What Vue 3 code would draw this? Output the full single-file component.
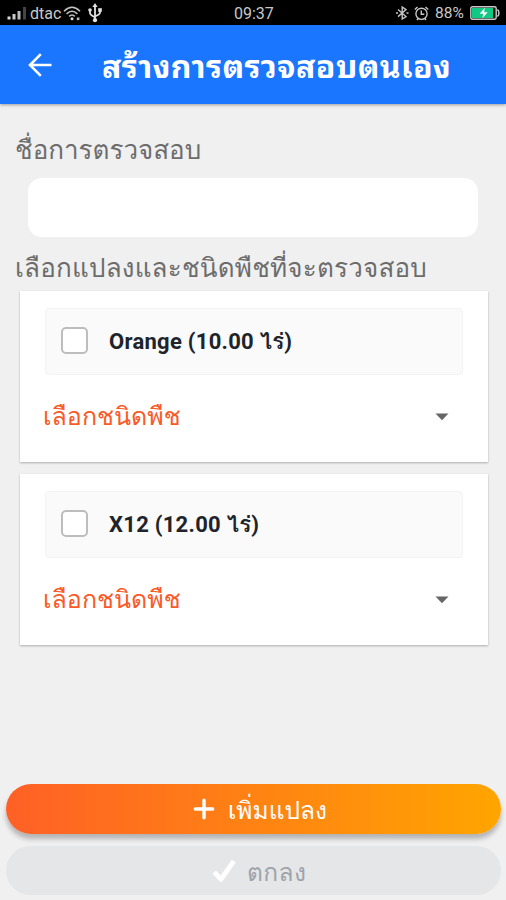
<script setup>
const plots = [
  { id: 1, name: 'Orange (10.00 ไร่)' },
  { id: 2, name: 'X12 (12.00 ไร่)' },
]
</script>

<template>
  <div class="screen">
    <div class="status">
      <svg class="signal" viewBox="0 0 20 14" width="20" height="14">
        <rect x="0.5" y="10.5" width="3" height="3" fill="#ddd" />
        <rect x="5.5" y="8" width="3" height="5.5" fill="#ccc" />
        <rect x="10.5" y="5" width="3" height="8.5" fill="#bbb" />
        <rect x="16" y="1" width="3" height="12.5" fill="#444" />
      </svg>
      <span class="carrier">dtac</span>
      <svg class="wifi" viewBox="0 0 18 15" width="18" height="15" fill="none" stroke="#c4c4c4" stroke-width="1.5">
        <path d="M1 5.2Q9-2.6 17 5.2M3.6 7.9Q9 2.5 14.4 7.9M6.2 10.4Q9 7.6 11.8 10.4" />
        <circle cx="9" cy="12.8" r="1.5" fill="#ddd" stroke="none" />
        <rect x="13.8" y="11.5" width="2.6" height="2.6" fill="#bbb" stroke="none" />
      </svg>
      <svg class="usb" viewBox="0 0 14 20" width="14" height="20" fill="none" stroke="#e2e2e2" stroke-width="1.8">
        <path d="M7 2v15M2 7v3.2q0 1.6 5 4M12 7v2.8q0 1.6-5 3.6" />
        <path d="M7 0l2.6 4H4.4z" fill="#e2e2e2" stroke="none" />
        <circle cx="2" cy="7" r="1.8" fill="#e2e2e2" stroke="none" />
        <rect x="10.2" y="5.2" width="3.6" height="3.6" fill="#e2e2e2" stroke="none" />
        <circle cx="7" cy="17.2" r="2.1" fill="#e2e2e2" stroke="none" />
      </svg>
      <span class="clock">09:37</span>
      <svg class="bt" viewBox="0 0 13 14" width="13" height="14" fill="none" stroke="#c4c4c4" stroke-width="1.4">
        <path d="M2 3.4l8 7.2L6.2 13V1L10 3.6 2 10.6" />
        <path d="M0 7h2M10.5 7h2" stroke-width="1.7" />
      </svg>
      <svg class="alarm" viewBox="0 0 15 15" width="15" height="15" fill="none" stroke="#c8c8c8" stroke-width="1.4">
        <circle cx="7.5" cy="7.8" r="5.6" />
        <path d="M7.3 4.5v3.7h3M.8 3.5L3.5 1M14.2 3.5L11.5 1M3 14l1.2-1.5M12 14l-1.2-1.5" />
      </svg>
      <span class="percent">88%</span>
      <svg class="battery" viewBox="0 0 30 14" width="30" height="14">
        <rect x="0.8" y="0.8" width="25.4" height="12.4" rx="1.6" fill="#111" stroke="#c9c9c9" stroke-width="1.4" />
        <path d="M27.3 3.8q1.6.4 1.6 3.2t-1.6 3.2" fill="none" stroke="#c9c9c9" stroke-width="1.4" />
        <rect x="2" y="2" width="21" height="10" fill="#10c982" />
        <path d="M14.8 1.7l-5.2 6h3.5l-.7 4.6 5.3-6h-3.5z" fill="#fff" />
      </svg>
    </div>

    <header class="bar">
      <svg class="back" viewBox="0 0 24 24" width="24" height="24" fill="none" stroke="#fff" stroke-width="2.6">
        <path d="M23.5 12H2.2M12.8 1.2L2 12l10.8 10.8" />
      </svg>
      <h1 class="title">สร้างการตรวจสอบตนเอง</h1>
    </header>

    <main class="content">
      <label class="label label-name" for="check-name"><span>ชื่อการตรวจสอบ</span></label>
      <input id="check-name" class="field" type="text" />
      <div class="label label-plots"><span>เลือกแปลงและชนิดพืชที่จะตรวจสอบ</span></div>
      <section v-for="plot in plots" :key="plot.id" class="card">
        <div class="plot">
          <span class="box"></span>
          <span class="name">{{ plot.name }}</span>
        </div>
        <div class="select">
          <span class="choice">เลือกชนิดพืช</span>
          <svg viewBox="0 0 14 8" width="14" height="8"><path d="M.5.5h13L7 7.3z" fill="#666" /></svg>
        </div>
      </section>
    </main>

    <footer class="actions">
      <button class="btn add">
        <svg viewBox="0 0 22 22" width="22" height="22" fill="none" stroke="#fff" stroke-width="3.4" stroke-linecap="round">
          <path d="M11 2.3v17.4M2.3 11h17.4" />
        </svg>
        <span class="add-text">เพิ่มแปลง</span>
      </button>
      <button class="btn ok">
        <svg viewBox="0 0 24 24" width="24" height="24" fill="none" stroke="#fff" stroke-width="4.8">
          <path d="M2.2 13.2l6.7 7.2L21.8 2.2" stroke-linejoin="round" />
        </svg>
        <span class="ok-text">ตกลง</span>
      </button>
    </footer>
  </div>
</template>

<style>
body { background: #f0f0f0; }
</style>

<style scoped>
.screen {
  width: 506px; height: 900px; display: flex; flex-direction: column;
  background: #f0f0f0; overflow: hidden;
  font-family: Roboto, Loma, sans-serif;
  white-space: nowrap;
}
.status {
  height: 25px; flex: none; background: #000; color: #c8c8c8;
  display: flex; align-items: center; font-size: 16px; line-height: 25px; padding-top: 1px; box-sizing: border-box;
}
.status svg { flex: none; }
.signal { margin-left: 7px; }
.carrier { margin-left: 3px; width: 32px; }
.wifi { margin-left: 1px; }
.usb { margin-left: 7px; }
.clock { margin-left: 132px; width: 40px; }
.bt { margin-left: 122px; }
.alarm { margin-left: 5px; }
.percent { margin-left: 6px; width: 29px; font-size: 15.5px; }
.battery { margin-left: 6px; }
.bar {
  height: 79px; flex: none; background: #1a75ff; display: flex; align-items: center;
  box-shadow: 0 1px 3px rgba(0, 0, 0, .35);
}
.back { margin-left: 28px; flex: none; }
.title {
  margin: 0 0 1px 50px; color: #fff; font-size: 32px; line-height: 40px; font-weight: 700;
  font-family: "Noto Sans Thai Looped", Loma, sans-serif; letter-spacing: .4px;
}
.content { flex: 1; display: flex; flex-direction: column; }
.label { color: #6c6c6c; font-size: 26px; line-height: 36px; height: 36px; margin-left: 15px; }
.label-name { margin-top: 28px; }
.field {
  margin: 10px 28px 0; height: 59px; box-sizing: border-box; border: 0;
  border-radius: 14px; background: #fff; flex: none; outline: 0;
}
.label-plots { margin-top: 13px; letter-spacing: .2px; }
.card {
  margin: 5px 18px 0 20px; height: 171px; background: #fff; flex: none;
  box-shadow: 0 1px 2px rgba(0, 0, 0, .28);
  padding-top: 17px; box-sizing: border-box;
}
.card + .card { margin-top: 12px; }
.plot {
  margin: 0 25px; height: 67px; box-sizing: border-box;
  border: 1px solid #f2f3f3; border-radius: 4px; background: #fafafa;
  display: flex; align-items: center;
}
.box {
  width: 27px; height: 27px; margin: 0 0 2px 15px; box-sizing: border-box;
  border: 2px solid #bdbdbd; border-radius: 5px; background: #fff;
}
.name { margin-left: 21px; color: #20242a; font-size: 22px; line-height: 30px; font-weight: 700; letter-spacing: .27px; }
.select { display: flex; align-items: center; justify-content: space-between; margin: 23px 39px 0 23px; height: 38px; }
.choice { color: #fa5a28; font-size: 25px; line-height: 38px; }
.actions { padding: 0 5px 5px 6px; display: flex; flex-direction: column; gap: 12px; }
.btn {
  height: 49px; border: 0; padding: 0; border-radius: 25px; display: flex; align-items: center;
  font-family: inherit; font-size: 24.5px;
}
.add {
  height: 50px; background: linear-gradient(90deg, #ff6026, #ffa500); color: #fff;
  box-shadow: 0 5px 5px rgba(0, 0, 0, .25);
}
.add svg { margin-left: 187px; }
.add-text { margin: 3px 0 0 13px; }
.ok { background: #e4e6e8; color: #9fa3a9; }
.ok svg { margin-left: 206px; }
.ok-text { margin: 4px 0 0 11px; letter-spacing: .4px; }
</style>
